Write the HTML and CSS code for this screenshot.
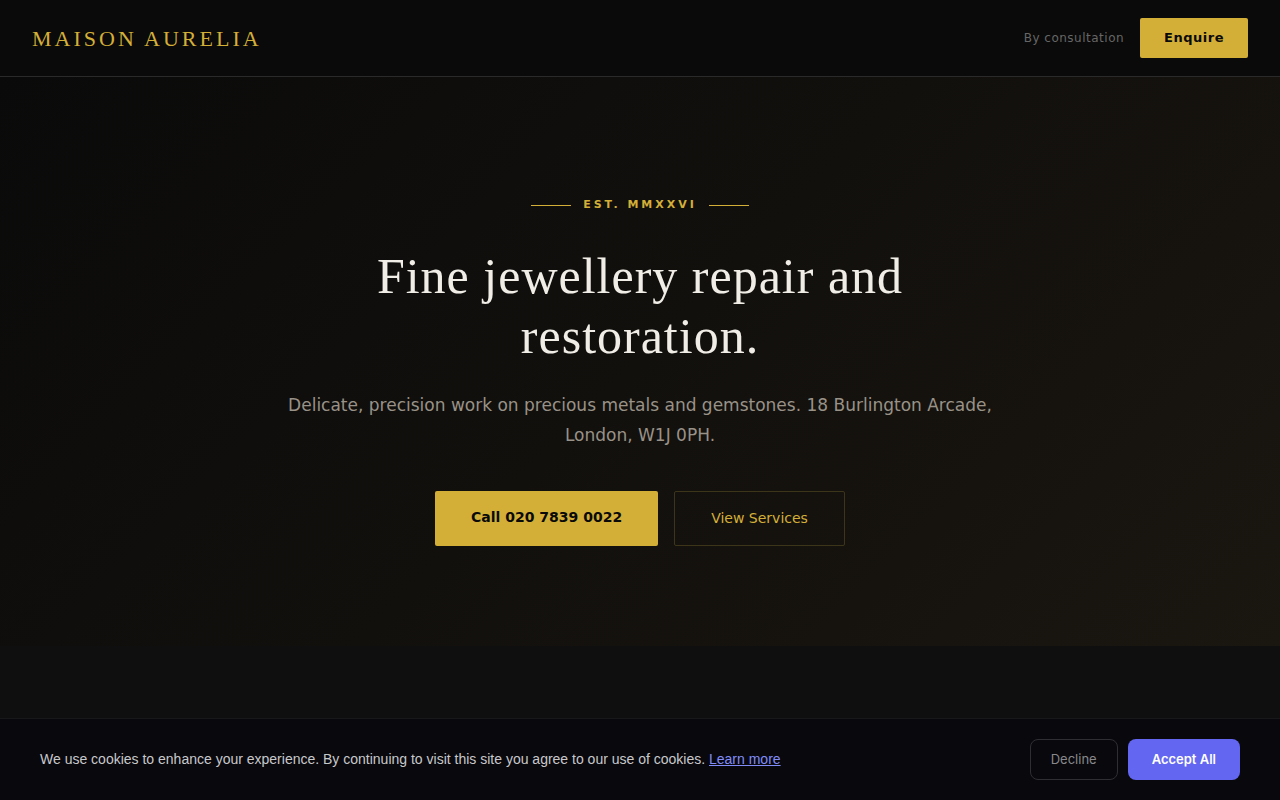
FILE: index.html
```html
<!DOCTYPE html>
<html lang="en">
<head>
    <meta charset="UTF-8">
    <meta name="viewport" content="width=device-width, initial-scale=1.0">
    <title>Maison Aurelia</title>
    <link rel="stylesheet" href="styles.css">
</head>
<body>
    <header class="nav">
        <a href="#" class="brand">MAISON AURELIA</a>
        <div class="nav-right">
            <span class="nav-note">By consultation</span>
            <button type="button" class="btn-enquire">Enquire</button>
        </div>
    </header>

    <main>
        <section class="hero">
            <div class="eyebrow">EST. MMXXVI</div>
            <h1>Fine jewellery repair and restoration.</h1>
            <p class="hero-text">Delicate, precision work on precious metals and gemstones. 18 Burlington Arcade, London, W1J 0PH.</p>
            <div class="hero-actions">
                <a href="tel:02078390022" class="btn btn-primary">Call 020 7839 0022</a>
                <a href="#services" class="btn btn-outline">View Services</a>
            </div>
        </section>
        <section class="services" id="services"></section>
    </main>

    <div class="cookie-bar">
        <p>We use cookies to enhance your experience. By continuing to visit this site you agree to our use of cookies. <a href="#">Learn more</a></p>
        <div class="cookie-actions">
            <button type="button" class="btn-decline">Decline</button>
            <button type="button" class="btn-accept">Accept All</button>
        </div>
    </div>
</body>
</html>
```
FILE: styles.css
```css
* {
    margin: 0;
    padding: 0;
    box-sizing: border-box;
}

body {
    font-family: "DejaVu Sans", sans-serif;
    min-height: 100vh;
    display: flex;
    flex-direction: column;
    background: #0a0a0a;
    color: #f0ede6;
}

a {
    text-decoration: none;
}

button {
    font-family: inherit;
    cursor: pointer;
}

/* Header */
.nav {
    display: flex;
    align-items: center;
    justify-content: space-between;
    padding: 18px 32px;
    background: #0a0a0a;
    border-bottom: 1px solid #2a2a2a;
}

.brand {
    font-family: "Liberation Serif", serif;
    font-size: 22px;
    line-height: 39px;
    letter-spacing: 3px;
    color: #d4af37;
}

.nav-right {
    display: flex;
    align-items: center;
    gap: 16px;
}

.nav-note {
    font-size: 12px;
    letter-spacing: 0.5px;
    color: #666;
}

.btn-enquire {
    padding: 10px 24px;
    background: #d4af37;
    color: #0a0a0a;
    border: none;
    border-radius: 2px;
    font-size: 13px;
    font-weight: 700;
    line-height: 20px;
    letter-spacing: 0.5px;
}

/* Hero */
main {
    flex: 1;
    display: flex;
    flex-direction: column;
}

.hero {
    padding: 120px 32px 100px;
    text-align: center;
    background: linear-gradient(135deg, #0a0a0a 0%, #1a1610 100%);
}

.eyebrow {
    display: flex;
    align-items: center;
    justify-content: center;
    gap: 12px;
    margin-bottom: 33px;
    font-size: 11px;
    font-weight: 700;
    line-height: 16px;
    letter-spacing: 3px;
    color: #d4af37;
}

.eyebrow::before,
.eyebrow::after {
    content: "";
    width: 40px;
    height: 1px;
    background: #d4af37;
}

h1 {
    max-width: 720px;
    margin: 0 auto 24px;
    font-family: "Liberation Serif", serif;
    font-size: 50px;
    font-weight: 400;
    line-height: 60px;
    letter-spacing: 1px;
}

.hero-text {
    max-width: 720px;
    margin: 0 auto 41px;
    font-size: 17px;
    line-height: 30px;
    color: #999288;
}

.hero-actions {
    display: flex;
    justify-content: center;
    gap: 16px;
}

.btn {
    padding: 16px 36px;
    border-radius: 2px;
    font-size: 14px;
    line-height: 21px;
}

.btn-primary {
    background: #d4af37;
    color: #0a0a0a;
    font-weight: 700;
}

.btn-outline {
    border: 1px solid #3d351a;
    color: #d4af37;
}

.services {
    flex: 1;
    background: #0f0f0f;
}

/* Cookie banner */
.cookie-bar {
    position: fixed;
    left: 0;
    right: 0;
    bottom: 0;
    display: flex;
    align-items: center;
    justify-content: space-between;
    gap: 24px;
    padding: 20px 40px;
    background: #08080d;
    border-top: 1px solid #18181b;
    font-family: Inter, sans-serif;
}

.cookie-bar p {
    font-family: "Liberation Sans", Arial, sans-serif;
    font-size: 14px;
    line-height: 21px;
    color: #c8c8cb;
}

.cookie-bar p a {
    color: #818cf8;
    text-decoration: underline;
}

.cookie-actions {
    display: flex;
    flex-shrink: 0;
    gap: 10px;
}

.cookie-actions button {
    border-radius: 8px;
    font-size: 13px;
    line-height: 19px;
}

.btn-decline {
    padding: 10px 20px;
    background: transparent;
    border: 1px solid #2e2e33;
    color: #88888c;
}

.btn-accept {
    padding: 11px 24px;
    background: #6366f1;
    border: none;
    color: #fff;
    font-weight: 600;
}
```
